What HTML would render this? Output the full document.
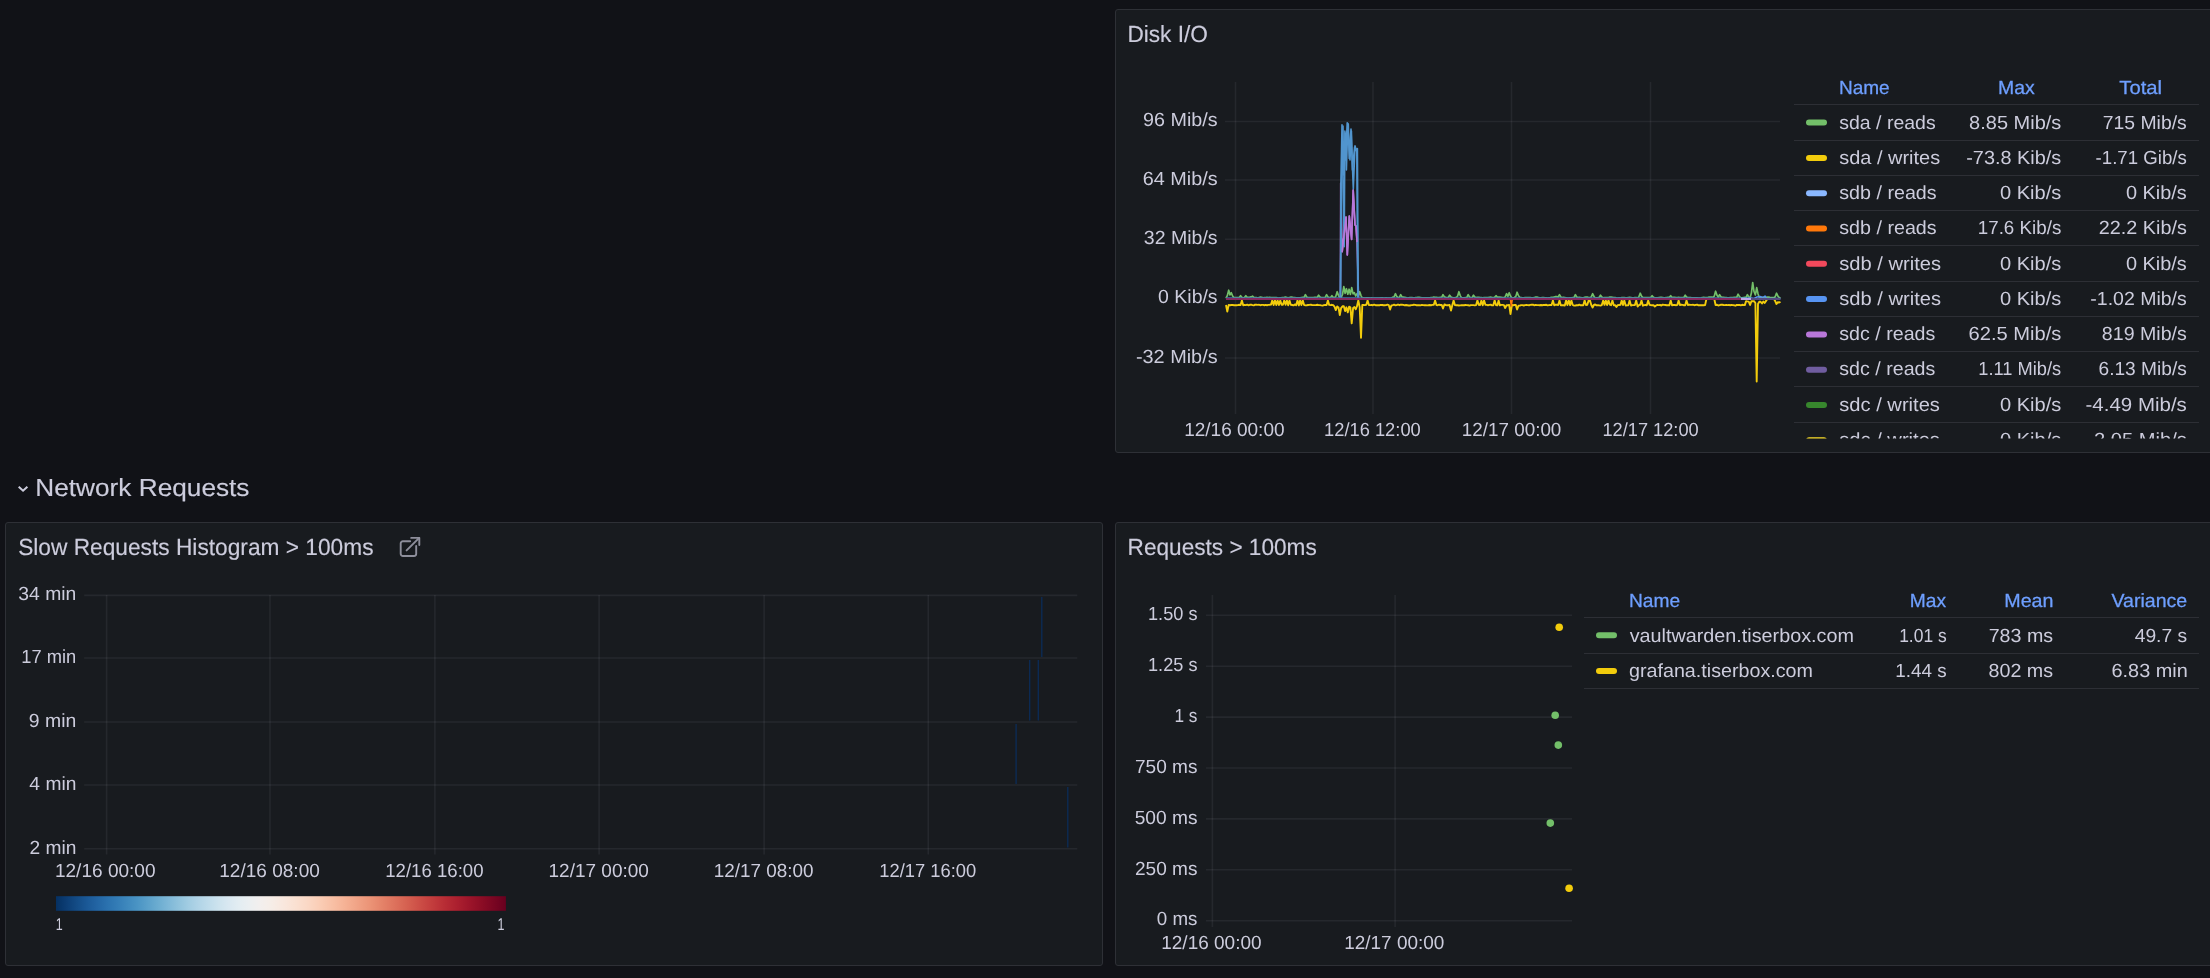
<!DOCTYPE html>
<html lang="en">
<head>
<meta charset="utf-8">
<title>Dashboard</title>
<style>
html,body{margin:0;padding:0;background:#111217;}
body{width:2210px;height:978px;position:relative;overflow:hidden;font-family:"Liberation Sans",sans-serif;color:#ccccdc;}
svg{display:block;position:absolute;left:0;top:0;overflow:hidden;will-change:transform}
svg text{font-family:"Liberation Sans",sans-serif;white-space:pre;text-rendering:geometricPrecision}
.panel{position:absolute;box-sizing:border-box;width:1098px;height:444px;background:#181b1f;border:1px solid #2e3036;border-radius:3px;overflow:hidden}
.panel svg{left:-1px;top:-1px}
.row{position:absolute;left:0;top:465px;width:400px;height:45px}
</style>
</head>
<body>
<section class="panel" style="left:1115px;top:9px">
<svg class="" width="1098" height="444" viewBox="0 0 1098 444">
<text x="12.42" y="33.1" font-size="23.4" fill="#ccccdc" textLength="80.39" lengthAdjust="spacingAndGlyphs" stroke="#ccccdc" stroke-width="0.15">Disk I/O</text>
<line x1="110" y1="112.5" x2="665" y2="112.5" stroke="rgba(235,245,255,0.062)" stroke-width="1.6"/>
<text x="28.08" y="117.2" font-size="19" fill="#ccccdc" textLength="74.54" lengthAdjust="spacingAndGlyphs">96 Mib/s</text>
<line x1="110" y1="171" x2="665" y2="171" stroke="rgba(235,245,255,0.062)" stroke-width="1.6"/>
<text x="27.69" y="175.7" font-size="19" fill="#ccccdc" textLength="74.92" lengthAdjust="spacingAndGlyphs">64 Mib/s</text>
<line x1="110" y1="230.2" x2="665" y2="230.2" stroke="rgba(235,245,255,0.062)" stroke-width="1.6"/>
<text x="28.86" y="234.9" font-size="19" fill="#ccccdc" textLength="73.75" lengthAdjust="spacingAndGlyphs">32 Mib/s</text>
<line x1="110" y1="289.5" x2="665" y2="289.5" stroke="rgba(235,245,255,0.062)" stroke-width="1.6"/>
<text x="43.14" y="294.2" font-size="19" fill="#ccccdc" textLength="59.46" lengthAdjust="spacingAndGlyphs">0 Kib/s</text>
<line x1="110" y1="349" x2="665" y2="349" stroke="rgba(235,245,255,0.062)" stroke-width="1.6"/>
<text x="20.92" y="353.7" font-size="19" fill="#ccccdc" textLength="81.70" lengthAdjust="spacingAndGlyphs">-32 Mib/s</text>
<line x1="120.5" y1="73" x2="120.5" y2="405" stroke="rgba(235,245,255,0.062)" stroke-width="1.6"/>
<text x="69.15" y="426.7" font-size="19" fill="#ccccdc" textLength="100.39" lengthAdjust="spacingAndGlyphs">12/16 00:00</text>
<line x1="258" y1="73" x2="258" y2="405" stroke="rgba(235,245,255,0.062)" stroke-width="1.6"/>
<text x="209.11" y="426.7" font-size="19" fill="#ccccdc" textLength="96.61" lengthAdjust="spacingAndGlyphs">12/16 12:00</text>
<line x1="396.5" y1="73" x2="396.5" y2="405" stroke="rgba(235,245,255,0.062)" stroke-width="1.6"/>
<text x="346.87" y="426.7" font-size="19" fill="#ccccdc" textLength="99.47" lengthAdjust="spacingAndGlyphs">12/17 00:00</text>
<line x1="535.5" y1="73" x2="535.5" y2="405" stroke="rgba(235,245,255,0.062)" stroke-width="1.6"/>
<text x="487.41" y="426.7" font-size="19" fill="#ccccdc" textLength="96.30" lengthAdjust="spacingAndGlyphs">12/17 12:00</text>
<polyline points="111.0,289.2 112.3,286.7 113.7,281.2 115.0,285.9 116.3,283.7 117.6,287.0 118.9,288.6 120.3,288.6 121.6,288.6 122.9,288.7 124.2,288.6 125.6,286.7 126.9,288.4 128.2,288.8 129.5,288.6 130.8,286.7 132.2,288.4 133.5,288.3 134.8,288.2 136.1,287.9 137.5,287.2 138.8,288.4 140.1,288.6 141.4,288.7 142.8,289.0 144.1,288.5 145.4,288.2 146.7,288.4 148.1,288.9 149.4,288.7 150.7,288.6 152.0,288.4 153.3,288.6 154.7,288.4 156.0,288.5 157.3,288.6 158.6,288.7 160.0,288.7 161.3,288.7 162.6,288.9 163.9,289.0 165.3,288.8 166.6,288.7 167.9,288.5 169.2,288.4 170.6,288.2 171.9,288.5 173.2,288.8 174.5,288.5 175.8,288.2 177.2,288.2 178.5,288.6 179.8,288.7 181.1,288.9 182.5,288.8 183.8,288.9 185.1,288.8 186.4,288.6 187.8,288.4 189.1,288.3 190.4,285.7 191.7,287.9 193.1,288.7 194.4,288.6 195.7,288.6 197.0,288.7 198.3,288.6 199.7,288.3 201.0,288.3 202.3,288.5 203.6,286.2 205.0,288.1 206.3,288.5 207.6,288.7 208.9,288.6 210.2,288.3 211.6,285.7 212.9,287.9 214.2,288.6 215.6,288.5 216.9,286.7 218.2,288.4 219.5,288.9 220.8,287.2 222.2,282.7 223.5,286.6 224.8,288.8 226.1,288.7 227.5,285.5 228.8,277.7 230.1,284.3 231.4,279.7 232.8,285.2 234.1,280.2 235.4,285.4 236.7,278.7 238.1,284.8 239.4,283.7 240.7,287.0 242.0,284.7 243.3,287.2 244.7,282.7 246.0,286.6 247.3,289.2 248.6,288.8 250.0,289.1 251.3,288.9 252.6,288.9 253.9,288.9 255.2,289.1 256.6,288.9 257.9,289.1 259.2,289.1 260.5,289.2 261.9,289.1 263.2,289.0 264.5,289.1 265.8,288.9 267.2,288.9 268.5,289.2 269.8,289.0 271.1,288.8 272.4,289.2 273.8,289.0 275.1,289.0 276.4,289.0 277.8,288.2 279.1,287.9 280.4,284.7 281.7,287.4 283.0,288.5 284.4,288.3 285.7,285.7 287.0,287.9 288.3,288.1 289.7,288.4 291.0,288.7 292.3,289.0 293.6,288.8 294.9,288.6 296.3,288.5 297.6,288.7 298.9,288.8 300.2,288.7 301.6,288.5 302.9,288.4 304.2,288.4 305.5,288.6 306.9,288.8 308.2,288.8 309.5,288.8 310.8,288.8 312.2,288.9 313.5,288.9 314.8,288.9 316.1,288.6 317.4,288.5 318.8,288.2 320.1,288.3 321.4,288.3 322.7,288.6 324.1,288.5 325.4,288.3 326.7,288.3 328.0,285.7 329.4,287.9 330.7,288.3 332.0,288.5 333.3,288.5 334.6,286.2 336.0,288.1 337.3,288.7 338.6,288.8 339.9,288.7 341.3,288.5 342.6,287.2 343.9,282.7 345.2,286.6 346.6,288.9 347.9,288.9 349.2,288.9 350.5,288.7 351.9,288.3 353.2,285.7 354.5,287.9 355.8,288.8 357.1,288.5 358.5,286.2 359.8,288.1 361.1,288.6 362.4,288.4 363.8,288.3 365.1,288.6 366.4,288.7 367.7,288.8 369.1,288.6 370.4,288.5 371.7,288.6 373.0,288.5 374.4,288.3 375.7,288.2 377.0,288.5 378.3,288.6 379.6,288.4 381.0,286.7 382.3,288.1 383.6,288.1 384.9,288.2 386.3,288.3 387.6,288.6 388.9,288.7 390.2,287.9 391.6,284.7 392.9,287.4 394.2,283.7 395.5,287.0 396.9,289.0 398.2,288.9 399.5,288.5 400.8,287.4 402.1,283.2 403.5,286.8 404.8,288.3 406.1,288.6 407.4,288.9 408.8,288.8 410.1,288.6 411.4,288.5 412.7,288.5 414.1,288.6 415.4,288.7 416.7,288.8 418.0,288.8 419.4,288.5 420.7,288.2 422.0,288.1 423.3,288.5 424.6,288.9 426.0,288.8 427.3,288.6 428.6,288.5 429.9,288.8 431.3,288.9 432.6,289.0 433.9,288.8 435.2,288.7 436.6,288.4 437.9,288.3 439.2,288.0 440.5,287.7 441.9,287.7 443.2,288.0 444.5,285.7 445.8,287.9 447.1,288.6 448.5,288.4 449.8,288.6 451.1,288.8 452.4,289.0 453.8,289.1 455.1,288.9 456.4,288.8 457.7,288.7 459.1,288.3 460.4,285.7 461.7,287.9 463.0,288.6 464.3,288.4 465.7,288.5 467.0,288.8 468.3,288.8 469.6,288.4 471.0,288.0 472.3,288.2 473.6,288.5 474.9,288.7 476.3,287.9 477.6,284.7 478.9,287.4 480.2,289.0 481.6,288.8 482.9,288.7 484.2,288.5 485.5,286.2 486.8,288.1 488.2,288.8 489.5,288.7 490.8,288.6 492.1,288.5 493.5,288.5 494.8,288.2 496.1,288.1 497.4,288.3 498.8,288.5 500.1,288.7 501.4,288.9 502.7,289.0 504.1,288.9 505.4,289.0 506.7,288.7 508.0,288.6 509.3,288.6 510.7,288.9 512.0,288.8 513.3,288.5 514.6,288.4 516.0,288.6 517.3,288.9 518.6,288.8 519.9,288.7 521.2,288.7 522.6,288.8 523.9,287.8 525.2,284.2 526.5,287.2 527.9,288.7 529.2,288.6 530.5,288.5 531.8,288.6 533.2,288.5 534.5,288.6 535.8,288.5 537.1,286.7 538.5,288.4 539.8,288.8 541.1,288.9 542.4,288.9 543.8,288.7 545.1,288.3 546.4,288.4 547.7,288.6 549.0,288.8 550.4,288.7 551.7,288.5 553.0,288.4 554.3,288.3 555.7,286.7 557.0,288.4 558.3,288.3 559.6,288.4 561.0,288.6 562.3,288.5 563.6,288.4 564.9,288.5 566.2,288.6 567.6,288.6 568.9,288.5 570.2,286.2 571.5,288.1 572.9,288.5 574.2,288.6 575.5,288.7 576.8,288.9 578.2,288.9 579.5,288.9 580.8,288.9 582.1,288.9 583.5,289.0 584.8,289.0 586.1,288.9 587.4,288.6 588.7,288.4 590.1,288.5 591.4,288.6 592.7,288.5 594.0,288.2 595.4,288.2 596.7,288.1 598.0,288.4 599.3,287.1 600.6,282.2 602.0,286.3 603.3,288.3 604.6,285.7 606.0,287.9 607.3,288.3 608.6,288.4 609.9,288.6 611.2,288.6 612.6,288.8 613.9,288.8 615.2,288.7 616.5,288.6 617.9,288.5 619.2,288.3 620.5,288.3 621.8,288.1 623.1,285.2 624.5,287.7 625.8,288.9 627.1,288.9 628.5,288.6 629.8,288.4 631.1,288.3 632.4,285.7 633.7,287.9 635.1,288.8 636.4,284.1 637.7,273.7 639.0,282.5 640.4,285.9 641.7,278.7 643.0,284.8 644.3,288.7 645.6,288.6 647.0,288.5 648.3,288.4 649.6,288.6 650.9,288.4 652.3,288.2 653.6,288.2 654.9,288.4 656.2,288.5 657.6,288.6 658.9,288.7 660.2,287.8 661.5,284.2 662.9,287.2 664.2,288.5 665.5,288.8" fill="none" stroke="#73bf69" stroke-width="1.7" stroke-linejoin="round"/>
<polyline points="111.0,296.0 112.3,302.6 113.7,295.9 115.0,296.2 116.3,296.0 117.6,295.9 118.9,296.2 120.3,296.1 121.6,296.2 122.9,296.1 124.2,295.8 125.6,296.1 126.9,291.4 128.2,296.3 129.5,295.9 130.8,296.1 132.2,295.7 133.5,296.3 134.8,295.8 136.1,295.6 137.5,296.1 138.8,296.4 140.1,295.7 141.4,295.8 142.8,295.9 144.1,295.8 145.4,296.2 146.7,295.9 148.1,295.9 149.4,296.2 150.7,295.9 152.0,296.2 153.3,295.9 154.7,295.8 156.0,295.6 157.3,291.4 158.6,296.0 160.0,291.4 161.3,296.1 162.6,291.4 163.9,296.1 165.3,291.4 166.6,295.8 167.9,295.7 169.2,291.4 170.6,295.8 171.9,291.4 173.2,296.3 174.5,291.4 175.8,295.8 177.2,296.0 178.5,296.4 179.8,295.4 181.1,296.2 182.5,291.4 183.8,296.4 185.1,291.4 186.4,296.0 187.8,291.4 189.1,295.9 190.4,296.4 191.7,296.3 193.1,296.0 194.4,295.9 195.7,295.6 197.0,296.0 198.3,296.1 199.7,296.1 201.0,296.1 202.3,295.8 203.6,296.1 205.0,296.1 206.3,296.4 207.6,296.6 208.9,296.1 210.2,295.9 211.6,296.1 212.9,291.4 214.2,295.9 215.6,296.1 216.9,295.8 218.2,296.2 219.5,297.7 220.8,301.1 222.2,297.4 223.5,298.4 224.8,306.1 226.1,299.1 227.5,297.3 228.8,297.2 230.1,302.1 231.4,298.3 232.8,303.4 234.1,297.7 235.4,298.3 236.7,314.4 238.1,299.1 239.4,298.1 240.7,300.3 242.0,297.2 243.3,291.5 244.7,298.1 246.0,328.7 247.3,296.0 248.6,296.0 250.0,296.1 251.3,295.8 252.6,291.4 253.9,296.1 255.2,296.1 256.6,296.0 257.9,296.2 259.2,295.7 260.5,296.2 261.9,296.2 263.2,296.2 264.5,296.2 265.8,295.9 267.2,296.0 268.5,296.3 269.8,296.2 271.1,296.1 272.4,295.7 273.8,296.2 275.1,300.5 276.4,296.4 277.8,296.2 279.1,295.7 280.4,296.3 281.7,296.1 283.0,295.5 284.4,296.2 285.7,295.7 287.0,295.8 288.3,295.9 289.7,296.4 291.0,296.0 292.3,296.2 293.6,296.5 294.9,296.5 296.3,296.1 297.6,296.0 298.9,295.8 300.2,295.9 301.6,296.2 302.9,296.2 304.2,296.1 305.5,296.4 306.9,295.9 308.2,296.1 309.5,296.3 310.8,296.2 312.2,296.4 313.5,296.2 314.8,296.0 316.1,296.2 317.4,295.9 318.8,295.7 320.1,291.4 321.4,296.1 322.7,296.2 324.1,295.7 325.4,296.0 326.7,295.9 328.0,299.5 329.4,295.5 330.7,296.0 332.0,296.3 333.3,296.2 334.6,295.9 336.0,301.5 337.3,296.3 338.6,291.4 339.9,296.1 341.3,296.2 342.6,296.3 343.9,296.5 345.2,296.4 346.6,296.2 347.9,296.2 349.2,296.3 350.5,296.0 351.9,296.1 353.2,296.3 354.5,296.6 355.8,296.1 357.1,296.1 358.5,296.1 359.8,296.4 361.1,296.1 362.4,291.4 363.8,295.9 365.1,296.1 366.4,291.4 367.7,296.3 369.1,291.4 370.4,295.7 371.7,295.9 373.0,296.2 374.4,295.9 375.7,295.7 377.0,296.4 378.3,296.2 379.6,291.4 381.0,296.0 382.3,296.4 383.6,291.4 384.9,296.4 386.3,295.9 387.6,295.9 388.9,296.1 390.2,299.0 391.6,296.3 392.9,296.2 394.2,295.9 395.5,305.0 396.9,296.0 398.2,296.3 399.5,295.9 400.8,296.0 402.1,300.5 403.5,296.7 404.8,296.6 406.1,296.1 407.4,296.1 408.8,296.5 410.1,296.1 411.4,295.9 412.7,296.1 414.1,296.2 415.4,295.9 416.7,295.7 418.0,295.7 419.4,296.3 420.7,295.9 422.0,296.1 423.3,296.1 424.6,296.2 426.0,296.0 427.3,296.2 428.6,295.9 429.9,296.0 431.3,295.8 432.6,296.4 433.9,296.1 435.2,295.9 436.6,296.0 437.9,291.4 439.2,296.3 440.5,295.7 441.9,295.8 443.2,296.0 444.5,291.4 445.8,296.3 447.1,296.1 448.5,296.3 449.8,296.6 451.1,291.4 452.4,296.0 453.8,291.4 455.1,296.2 456.4,291.4 457.7,296.0 459.1,296.6 460.4,296.5 461.7,296.2 463.0,296.3 464.3,295.6 465.7,296.3 467.0,296.1 468.3,296.2 469.6,291.4 471.0,296.0 472.3,295.7 473.6,291.4 474.9,291.4 476.3,296.0 477.6,298.5 478.9,296.0 480.2,295.5 481.6,296.4 482.9,296.2 484.2,296.4 485.5,296.6 486.8,296.1 488.2,291.4 489.5,295.9 490.8,291.4 492.1,296.0 493.5,291.4 494.8,295.6 496.1,296.2 497.4,291.4 498.8,296.2 500.1,296.1 501.4,298.0 502.7,296.1 504.1,296.0 505.4,295.9 506.7,291.4 508.0,296.1 509.3,291.4 510.7,296.6 512.0,296.4 513.3,296.3 514.6,291.4 516.0,296.5 517.3,296.1 518.6,296.1 519.9,296.0 521.2,291.4 522.6,297.5 523.9,296.1 525.2,295.8 526.5,291.4 527.9,296.7 529.2,296.1 530.5,296.0 531.8,296.2 533.2,291.4 534.5,295.8 535.8,296.1 537.1,296.3 538.5,296.2 539.8,297.5 541.1,296.5 542.4,295.9 543.8,296.1 545.1,296.0 546.4,296.5 547.7,295.6 549.0,295.9 550.4,296.0 551.7,296.3 553.0,296.2 554.3,296.4 555.7,291.4 557.0,296.3 558.3,296.0 559.6,295.9 561.0,296.2 562.3,295.9 563.6,291.4 564.9,296.0 566.2,295.7 567.6,295.9 568.9,296.2 570.2,296.2 571.5,291.4 572.9,296.1 574.2,295.7 575.5,295.9 576.8,295.9 578.2,295.8 579.5,296.2 580.8,295.9 582.1,295.6 583.5,296.3 584.8,296.1 586.1,296.2 587.4,296.1 588.7,296.3 590.1,296.1 591.4,290.0 592.7,290.0 594.0,290.0 595.4,290.0 596.7,290.0 598.0,290.0 599.3,290.0 600.6,296.1 602.0,295.8 603.3,296.5 604.6,296.1 606.0,295.8 607.3,295.7 608.6,296.0 609.9,296.1 611.2,295.9 612.6,296.1 613.9,295.9 615.2,296.2 616.5,295.9 617.9,296.1 619.2,296.3 620.5,296.7 621.8,295.9 623.1,296.0 624.5,295.9 625.8,296.3 627.1,295.8 628.5,296.0 629.8,296.1 631.1,292.1 632.4,292.4 633.7,292.6 635.1,296.0 636.4,292.2 637.7,292.2 639.0,292.1 640.4,294.0 641.7,372.6 643.0,295.0 644.3,292.7 645.6,292.8 647.0,294.5 648.3,292.5 649.6,294.0 650.9,292.1 652.3,290.0 653.6,290.0 654.9,290.0 656.2,290.0 657.6,290.0 658.9,290.0 660.2,292.1 661.5,295.0 662.9,293.2 664.2,293.5 665.5,292.8" fill="none" stroke="#f2cc0c" stroke-width="1.9" stroke-linejoin="round"/>
<polyline points="225.4,290.0 225.7,174.0 227.2,243.0 231.0,208.0 232.3,246.0 234.3,207.0 236.6,230.5 238.2,181.0 240.0,216.0 241.0,217.0 242.0,233.0 243.6,290.0" fill="none" stroke="#b877d9" stroke-width="1.6" stroke-linejoin="round"/>
<polyline points="225.3,290.0 226.6,171.0 228.0,117.0 228.6,166.0 230.2,124.0 231.4,161.0 232.8,116.0 235.0,151.0 236.4,122.0 237.4,161.0 239.6,138.0 241.8,143.0 242.8,290.0" fill="none" stroke="#5195ce" stroke-width="1.6" stroke-linejoin="round"/>
<polyline points="225.5,290.0 225.9,174.0 227.0,115.8 229.2,237.7 229.9,122.0 230.6,151.0 232.2,113.8 233.3,115.0 234.2,149.4 236.0,120.0 238.3,180.0 240.0,136.7 241.2,141.0 242.4,139.6 243.2,290.0" fill="none" stroke="#5195ce" stroke-width="1.6" stroke-linejoin="round"/>
<polyline points="227.2,243.0 231.0,208.0 232.3,246.0 234.3,207.0 236.6,230.5 238.2,181.0 240.0,216.0 241.0,217.0 242.0,233.0" fill="none" stroke="#b877d9" stroke-width="1.6" stroke-linejoin="round"/>
<polyline points="626.0,289.3 636.0,289.0 639.0,289.4 642.0,288.0 645.0,287.5 648.0,288.5 650.0,287.0 651.5,289.4 665.5,289.5" fill="none" stroke="#5794f2" stroke-width="1.5" stroke-linejoin="round"/>
<line x1="111" y1="288.6" x2="626" y2="288.6" stroke="#3f78b0" stroke-width="1" opacity="0.8"/>
<line x1="111" y1="290" x2="626" y2="290" stroke="#84295f" stroke-width="2"/>
<line x1="626" y1="290" x2="636" y2="290" stroke="#c0a3e6" stroke-width="2"/>
<line x1="636" y1="290" x2="665.5" y2="290" stroke="#564a80" stroke-width="2"/>
<polyline points="395.5,291.0 396.3,297.0 397.2,291.0" fill="none" stroke="#ff780a" stroke-width="1.5" stroke-linejoin="round"/>
<clipPath id="lg1"><rect x="670" y="61" width="430" height="368.5"/></clipPath><g clip-path="url(#lg1)">
<text x="723.99" y="84.8" font-size="19" fill="#6e9fff" textLength="50.70" lengthAdjust="spacingAndGlyphs" stroke="#6e9fff" stroke-width="0.3">Name</text>
<text x="882.96" y="84.8" font-size="19" fill="#6e9fff" textLength="36.70" lengthAdjust="spacingAndGlyphs" stroke="#6e9fff" stroke-width="0.3">Max</text>
<text x="1004.32" y="84.8" font-size="19" fill="#6e9fff" textLength="42.72" lengthAdjust="spacingAndGlyphs" stroke="#6e9fff" stroke-width="0.3">Total</text>
<line x1="679" y1="95.5" x2="1084" y2="95.5" stroke="#2d2f35" stroke-width="1"/>
<rect x="691" y="110.6" width="21.0" height="6" rx="3.0" fill="#73bf69"/>
<text x="724.26" y="119.5" font-size="19" fill="#ccccdc" textLength="96.45" lengthAdjust="spacingAndGlyphs">sda / reads</text>
<text x="854.13" y="119.5" font-size="19" fill="#ccccdc" textLength="92.19" lengthAdjust="spacingAndGlyphs">8.85 Mib/s</text>
<text x="987.71" y="119.5" font-size="19" fill="#ccccdc" textLength="84.10" lengthAdjust="spacingAndGlyphs">715 Mib/s</text>
<line x1="679" y1="131.5" x2="1084" y2="131.5" stroke="#2d2f35" stroke-width="1"/>
<rect x="691" y="145.9" width="21.0" height="6" rx="3.0" fill="#f2cc0c"/>
<text x="724.24" y="154.75" font-size="19" fill="#ccccdc" textLength="100.88" lengthAdjust="spacingAndGlyphs">sda / writes</text>
<text x="851.22" y="154.75" font-size="19" fill="#ccccdc" textLength="95.10" lengthAdjust="spacingAndGlyphs">-73.8 Kib/s</text>
<text x="980.57" y="154.75" font-size="19" fill="#ccccdc" textLength="91.20" lengthAdjust="spacingAndGlyphs">-1.71 Gib/s</text>
<line x1="679" y1="166.5" x2="1084" y2="166.5" stroke="#2d2f35" stroke-width="1"/>
<rect x="691" y="181.2" width="21.0" height="6" rx="3.0" fill="#8ab8ff"/>
<text x="724.25" y="190.0" font-size="19" fill="#ccccdc" textLength="97.36" lengthAdjust="spacingAndGlyphs">sdb / reads</text>
<text x="885.02" y="190.0" font-size="19" fill="#ccccdc" textLength="61.31" lengthAdjust="spacingAndGlyphs">0 Kib/s</text>
<text x="1010.92" y="190.0" font-size="19" fill="#ccccdc" textLength="60.90" lengthAdjust="spacingAndGlyphs">0 Kib/s</text>
<line x1="679" y1="201.5" x2="1084" y2="201.5" stroke="#2d2f35" stroke-width="1"/>
<rect x="691" y="216.5" width="21.0" height="6" rx="3.0" fill="#ff780a"/>
<text x="724.25" y="225.25" font-size="19" fill="#ccccdc" textLength="97.36" lengthAdjust="spacingAndGlyphs">sdb / reads</text>
<text x="862.77" y="225.25" font-size="19" fill="#ccccdc" textLength="83.51" lengthAdjust="spacingAndGlyphs">17.6 Kib/s</text>
<text x="983.8" y="225.25" font-size="19" fill="#ccccdc" textLength="88.01" lengthAdjust="spacingAndGlyphs">22.2 Kib/s</text>
<line x1="679" y1="236.5" x2="1084" y2="236.5" stroke="#2d2f35" stroke-width="1"/>
<rect x="691" y="251.8" width="21.0" height="6" rx="3.0" fill="#f2495c"/>
<text x="724.24" y="260.5" font-size="19" fill="#ccccdc" textLength="101.89" lengthAdjust="spacingAndGlyphs">sdb / writes</text>
<text x="885.02" y="260.5" font-size="19" fill="#ccccdc" textLength="61.31" lengthAdjust="spacingAndGlyphs">0 Kib/s</text>
<text x="1010.92" y="260.5" font-size="19" fill="#ccccdc" textLength="60.90" lengthAdjust="spacingAndGlyphs">0 Kib/s</text>
<line x1="679" y1="272.5" x2="1084" y2="272.5" stroke="#2d2f35" stroke-width="1"/>
<rect x="691" y="287.1" width="21.0" height="6" rx="3.0" fill="#5794f2"/>
<text x="724.24" y="295.75" font-size="19" fill="#ccccdc" textLength="101.89" lengthAdjust="spacingAndGlyphs">sdb / writes</text>
<text x="885.02" y="295.75" font-size="19" fill="#ccccdc" textLength="61.31" lengthAdjust="spacingAndGlyphs">0 Kib/s</text>
<text x="975.33" y="295.75" font-size="19" fill="#ccccdc" textLength="96.47" lengthAdjust="spacingAndGlyphs">-1.02 Mib/s</text>
<line x1="679" y1="307.5" x2="1084" y2="307.5" stroke="#2d2f35" stroke-width="1"/>
<rect x="691" y="322.4" width="21.0" height="6" rx="3.0" fill="#b877d9"/>
<text x="724.25" y="331.0" font-size="19" fill="#ccccdc" textLength="96.06" lengthAdjust="spacingAndGlyphs">sdc / reads</text>
<text x="853.58" y="331.0" font-size="19" fill="#ccccdc" textLength="92.75" lengthAdjust="spacingAndGlyphs">62.5 Mib/s</text>
<text x="986.85" y="331.0" font-size="19" fill="#ccccdc" textLength="84.96" lengthAdjust="spacingAndGlyphs">819 Mib/s</text>
<line x1="679" y1="342.5" x2="1084" y2="342.5" stroke="#2d2f35" stroke-width="1"/>
<rect x="691" y="357.7" width="21.0" height="6" rx="3.0" fill="#705da0"/>
<text x="724.25" y="366.25" font-size="19" fill="#ccccdc" textLength="96.06" lengthAdjust="spacingAndGlyphs">sdc / reads</text>
<text x="863.33" y="366.25" font-size="19" fill="#ccccdc" textLength="82.92" lengthAdjust="spacingAndGlyphs">1.11 Mib/s</text>
<text x="983.53" y="366.25" font-size="19" fill="#ccccdc" textLength="88.26" lengthAdjust="spacingAndGlyphs">6.13 Mib/s</text>
<line x1="679" y1="377.5" x2="1084" y2="377.5" stroke="#2d2f35" stroke-width="1"/>
<rect x="691" y="393.0" width="21.0" height="6" rx="3.0" fill="#37872d"/>
<text x="724.24" y="401.5" font-size="19" fill="#ccccdc" textLength="100.69" lengthAdjust="spacingAndGlyphs">sdc / writes</text>
<text x="885.02" y="401.5" font-size="19" fill="#ccccdc" textLength="61.31" lengthAdjust="spacingAndGlyphs">0 Kib/s</text>
<text x="970.49" y="401.5" font-size="19" fill="#ccccdc" textLength="101.35" lengthAdjust="spacingAndGlyphs">-4.49 Mib/s</text>
<line x1="679" y1="413.5" x2="1084" y2="413.5" stroke="#2d2f35" stroke-width="1"/>
<rect x="691" y="428.3" width="21.0" height="6" rx="3.0" fill="#fade2a"/>
<text x="724.24" y="436.75" font-size="19" fill="#ccccdc" textLength="100.69" lengthAdjust="spacingAndGlyphs">sdc / writes</text>
<text x="885.02" y="436.75" font-size="19" fill="#ccccdc" textLength="61.31" lengthAdjust="spacingAndGlyphs">0 Kib/s</text>
<text x="972.21" y="436.75" font-size="19" fill="#ccccdc" textLength="99.62" lengthAdjust="spacingAndGlyphs">-2.05 Mib/s</text>
<line x1="679" y1="448.5" x2="1084" y2="448.5" stroke="#2d2f35" stroke-width="1"/>
</g>
</svg>
</section>
<div class="row">
<svg class="" width="400" height="45" viewBox="0 0 400 45">
<path d="M18.7 21.7 L23.05 25.7 L27.4 21.7" fill="none" stroke="#ccccdc" stroke-width="2" stroke-linecap="butt" stroke-linejoin="miter"/>
<text x="35.32" y="31.0" font-size="24.7" fill="#ccccdc" textLength="214.15" lengthAdjust="spacingAndGlyphs" stroke="#ccccdc" stroke-width="0.15">Network Requests</text>
</svg>
</div>
<section class="panel" style="left:5px;top:522px">
<svg class="" width="1098" height="444" viewBox="0 0 1098 444">
<text x="13.14" y="33" font-size="23.4" fill="#ccccdc" textLength="355.40" lengthAdjust="spacingAndGlyphs" stroke="#ccccdc" stroke-width="0.15">Slow Requests Histogram &gt; 100ms</text>
<g fill="none" stroke="#8e8f9c" stroke-width="1.9" stroke-linecap="round" stroke-linejoin="round"><path d="M405.2 19.2 H397.9 a2.2 2.2 0 0 0 -2.2 2.2 V31.8 a2.2 2.2 0 0 0 2.2 2.2 H409 a2.2 2.2 0 0 0 2.2 -2.2 V24"/><path d="M401.6 28.4 L414.2 15.9"/><path d="M406.2 15.9 H414.3 V23.0"/></g>
<line x1="79.2" y1="73.4" x2="1072.3" y2="73.4" stroke="rgba(235,245,255,0.062)" stroke-width="1.6"/>
<text x="13.36" y="78.1" font-size="19" fill="#ccccdc" textLength="57.99" lengthAdjust="spacingAndGlyphs">34 min</text>
<line x1="79.2" y1="136.0" x2="1072.3" y2="136.0" stroke="rgba(235,245,255,0.062)" stroke-width="1.6"/>
<text x="16.3" y="140.7" font-size="19" fill="#ccccdc" textLength="54.99" lengthAdjust="spacingAndGlyphs">17 min</text>
<line x1="79.2" y1="200.0" x2="1072.3" y2="200.0" stroke="rgba(235,245,255,0.062)" stroke-width="1.6"/>
<text x="23.89" y="204.7" font-size="19" fill="#ccccdc" textLength="47.47" lengthAdjust="spacingAndGlyphs">9 min</text>
<line x1="79.2" y1="263.0" x2="1072.3" y2="263.0" stroke="rgba(235,245,255,0.062)" stroke-width="1.6"/>
<text x="24.36" y="267.7" font-size="19" fill="#ccccdc" textLength="46.99" lengthAdjust="spacingAndGlyphs">4 min</text>
<line x1="79.2" y1="326.8" x2="1072.3" y2="326.8" stroke="rgba(235,245,255,0.062)" stroke-width="1.6"/>
<text x="24.44" y="331.5" font-size="19" fill="#ccccdc" textLength="46.91" lengthAdjust="spacingAndGlyphs">2 min</text>
<line x1="101.6" y1="73" x2="101.6" y2="332.5" stroke="rgba(235,245,255,0.062)" stroke-width="1.6"/>
<text x="49.95" y="355" font-size="19" fill="#ccccdc" textLength="100.59" lengthAdjust="spacingAndGlyphs">12/16 00:00</text>
<line x1="265.0" y1="73" x2="265.0" y2="332.5" stroke="rgba(235,245,255,0.062)" stroke-width="1.6"/>
<text x="214.25" y="355" font-size="19" fill="#ccccdc" textLength="100.59" lengthAdjust="spacingAndGlyphs">12/16 08:00</text>
<line x1="429.9" y1="73" x2="429.9" y2="332.5" stroke="rgba(235,245,255,0.062)" stroke-width="1.6"/>
<text x="380.28" y="355" font-size="19" fill="#ccccdc" textLength="98.24" lengthAdjust="spacingAndGlyphs">12/16 16:00</text>
<line x1="594.1" y1="73" x2="594.1" y2="332.5" stroke="rgba(235,245,255,0.062)" stroke-width="1.6"/>
<text x="543.55" y="355" font-size="19" fill="#ccccdc" textLength="100.29" lengthAdjust="spacingAndGlyphs">12/17 00:00</text>
<line x1="759.1" y1="73" x2="759.1" y2="332.5" stroke="rgba(235,245,255,0.062)" stroke-width="1.6"/>
<text x="708.86" y="355" font-size="19" fill="#ccccdc" textLength="99.67" lengthAdjust="spacingAndGlyphs">12/17 08:00</text>
<line x1="923.3" y1="73" x2="923.3" y2="332.5" stroke="rgba(235,245,255,0.062)" stroke-width="1.6"/>
<text x="874.3" y="355" font-size="19" fill="#ccccdc" textLength="96.91" lengthAdjust="spacingAndGlyphs">12/17 16:00</text>
<line x1="1036.8" y1="75" x2="1036.8" y2="135" stroke="#0b2c58" stroke-width="1.3"/>
<line x1="1024.7" y1="138" x2="1024.7" y2="198.5" stroke="#0b2c58" stroke-width="1.3"/>
<line x1="1033.3" y1="138" x2="1033.3" y2="198.5" stroke="#0b2c58" stroke-width="1.3"/>
<line x1="1011.1" y1="202" x2="1011.1" y2="262" stroke="#0b2c58" stroke-width="1.3"/>
<line x1="1062.8" y1="265" x2="1062.8" y2="325.5" stroke="#0b2c58" stroke-width="1.3"/>
<defs><linearGradient id="rdbu" x1="0" x2="1" y1="0" y2="0"><stop offset="0.00%" stop-color="#053061"/><stop offset="2.26%" stop-color="#0c3d74"/><stop offset="4.52%" stop-color="#134b85"/><stop offset="6.78%" stop-color="#1a5896"/><stop offset="9.04%" stop-color="#2264a3"/><stop offset="11.30%" stop-color="#2a71ae"/><stop offset="13.56%" stop-color="#337cb6"/><stop offset="15.82%" stop-color="#3e88bd"/><stop offset="18.08%" stop-color="#4a94c4"/><stop offset="20.34%" stop-color="#5aa0ca"/><stop offset="22.60%" stop-color="#6bacd0"/><stop offset="24.86%" stop-color="#7db7d7"/><stop offset="27.12%" stop-color="#8fc2dc"/><stop offset="29.38%" stop-color="#a1cce2"/><stop offset="31.64%" stop-color="#b1d4e7"/><stop offset="33.90%" stop-color="#bfdceb"/><stop offset="36.16%" stop-color="#cde3ee"/><stop offset="38.42%" stop-color="#d9e8f1"/><stop offset="40.68%" stop-color="#e3edf2"/><stop offset="42.94%" stop-color="#ebeff1"/><stop offset="45.20%" stop-color="#f2efee"/><stop offset="47.94%" stop-color="#f6ede7"/><stop offset="50.68%" stop-color="#f9e7dd"/><stop offset="53.42%" stop-color="#fae0d1"/><stop offset="56.16%" stop-color="#fad7c4"/><stop offset="58.90%" stop-color="#faccb4"/><stop offset="61.64%" stop-color="#f8bfa4"/><stop offset="64.38%" stop-color="#f5b194"/><stop offset="67.12%" stop-color="#f0a285"/><stop offset="69.86%" stop-color="#eb9376"/><stop offset="72.60%" stop-color="#e48268"/><stop offset="75.34%" stop-color="#dd715c"/><stop offset="78.08%" stop-color="#d56050"/><stop offset="80.82%" stop-color="#cc4e46"/><stop offset="83.56%" stop-color="#c33d3d"/><stop offset="86.30%" stop-color="#b82d35"/><stop offset="89.04%" stop-color="#ac202f"/><stop offset="91.78%" stop-color="#9d152a"/><stop offset="94.52%" stop-color="#8c0d25"/><stop offset="97.26%" stop-color="#7a0622"/><stop offset="100.00%" stop-color="#67001f"/></linearGradient></defs>
<rect x="51" y="374.2" width="449.9" height="14.6" fill="url(#rdbu)"/>
<text x="50.65" y="408" font-size="17.2" fill="#ccccdc" textLength="6.97" lengthAdjust="spacingAndGlyphs">1</text>
<text x="492.45" y="408" font-size="17.2" fill="#ccccdc" textLength="6.97" lengthAdjust="spacingAndGlyphs">1</text>
</svg>
</section>
<section class="panel" style="left:1115px;top:522px">
<svg class="" width="1098" height="444" viewBox="0 0 1098 444">
<text x="12.62" y="33.0" font-size="23.4" fill="#ccccdc" textLength="189.12" lengthAdjust="spacingAndGlyphs" stroke="#ccccdc" stroke-width="0.15">Requests &gt; 100ms</text>
<line x1="91" y1="398.7" x2="457" y2="398.7" stroke="rgba(235,245,255,0.062)" stroke-width="1.6"/>
<text x="41.87" y="403.4" font-size="19" fill="#ccccdc" textLength="40.61" lengthAdjust="spacingAndGlyphs">0 ms</text>
<line x1="91" y1="347.8" x2="457" y2="347.8" stroke="rgba(235,245,255,0.062)" stroke-width="1.6"/>
<text x="20.04" y="352.5" font-size="19" fill="#ccccdc" textLength="62.45" lengthAdjust="spacingAndGlyphs">250 ms</text>
<line x1="91" y1="296.9" x2="457" y2="296.9" stroke="rgba(235,245,255,0.062)" stroke-width="1.6"/>
<text x="19.73" y="301.6" font-size="19" fill="#ccccdc" textLength="62.76" lengthAdjust="spacingAndGlyphs">500 ms</text>
<line x1="91" y1="246.0" x2="457" y2="246.0" stroke="rgba(235,245,255,0.062)" stroke-width="1.6"/>
<text x="20.02" y="250.7" font-size="19" fill="#ccccdc" textLength="62.46" lengthAdjust="spacingAndGlyphs">750 ms</text>
<line x1="91" y1="195.1" x2="457" y2="195.1" stroke="rgba(235,245,255,0.062)" stroke-width="1.6"/>
<text x="59.38" y="199.8" font-size="19" fill="#ccccdc" textLength="23.04" lengthAdjust="spacingAndGlyphs">1 s</text>
<line x1="91" y1="144.2" x2="457" y2="144.2" stroke="rgba(235,245,255,0.062)" stroke-width="1.6"/>
<text x="33.02" y="148.9" font-size="19" fill="#ccccdc" textLength="49.44" lengthAdjust="spacingAndGlyphs">1.25 s</text>
<line x1="91" y1="93.3" x2="457" y2="93.3" stroke="rgba(235,245,255,0.062)" stroke-width="1.6"/>
<text x="33.02" y="98.0" font-size="19" fill="#ccccdc" textLength="49.44" lengthAdjust="spacingAndGlyphs">1.50 s</text>
<line x1="97.4" y1="73" x2="97.4" y2="405" stroke="rgba(235,245,255,0.062)" stroke-width="1.6"/>
<text x="46.25" y="427" font-size="19" fill="#ccccdc" textLength="100.29" lengthAdjust="spacingAndGlyphs">12/16 00:00</text>
<line x1="280.1" y1="73" x2="280.1" y2="405" stroke="rgba(235,245,255,0.062)" stroke-width="1.6"/>
<text x="229.26" y="427" font-size="19" fill="#ccccdc" textLength="100.08" lengthAdjust="spacingAndGlyphs">12/17 00:00</text>
<circle cx="444.2" cy="105.3" r="3.8" fill="#f2cc0c"/>
<circle cx="440.2" cy="193.3" r="3.8" fill="#73bf69"/>
<circle cx="443.3" cy="223.1" r="3.8" fill="#73bf69"/>
<circle cx="435.3" cy="301.1" r="3.8" fill="#73bf69"/>
<circle cx="454.1" cy="366.2" r="3.8" fill="#f2cc0c"/>
<text x="513.98" y="85.0" font-size="19" fill="#6e9fff" textLength="51.12" lengthAdjust="spacingAndGlyphs" stroke="#6e9fff" stroke-width="0.3">Name</text>
<text x="794.87" y="85.0" font-size="19" fill="#6e9fff" textLength="36.28" lengthAdjust="spacingAndGlyphs" stroke="#6e9fff" stroke-width="0.3">Max</text>
<text x="889.23" y="85.0" font-size="19" fill="#6e9fff" textLength="49.30" lengthAdjust="spacingAndGlyphs" stroke="#6e9fff" stroke-width="0.3">Mean</text>
<text x="996.47" y="85.0" font-size="19" fill="#6e9fff" textLength="75.74" lengthAdjust="spacingAndGlyphs" stroke="#6e9fff" stroke-width="0.3">Variance</text>
<line x1="469" y1="95.5" x2="1084" y2="95.5" stroke="#2d2f35" stroke-width="1"/>
<line x1="469" y1="131.5" x2="1084" y2="131.5" stroke="#2d2f35" stroke-width="1"/>
<line x1="469" y1="166.5" x2="1084" y2="166.5" stroke="#2d2f35" stroke-width="1"/>
<rect x="481" y="110.2" width="21.0" height="6" rx="3.0" fill="#73bf69"/>
<rect x="481" y="146.0" width="21.0" height="6" rx="3.0" fill="#f2cc0c"/>
<text x="514.73" y="119.5" font-size="19" fill="#ccccdc" textLength="224.17" lengthAdjust="spacingAndGlyphs">vaultwarden.tiserbox.com</text>
<text x="513.97" y="155.2" font-size="19" fill="#ccccdc" textLength="184.03" lengthAdjust="spacingAndGlyphs">grafana.tiserbox.com</text>
<text x="784.17" y="119.5" font-size="19" fill="#ccccdc" textLength="47.56" lengthAdjust="spacingAndGlyphs">1.01 s</text>
<text x="780.36" y="155.2" font-size="19" fill="#ccccdc" textLength="51.42" lengthAdjust="spacingAndGlyphs">1.44 s</text>
<text x="873.69" y="119.5" font-size="19" fill="#ccccdc" textLength="64.42" lengthAdjust="spacingAndGlyphs">783 ms</text>
<text x="873.54" y="155.2" font-size="19" fill="#ccccdc" textLength="64.57" lengthAdjust="spacingAndGlyphs">802 ms</text>
<text x="1019.66" y="119.5" font-size="19" fill="#ccccdc" textLength="52.54" lengthAdjust="spacingAndGlyphs">49.7 s</text>
<text x="996.49" y="155.2" font-size="19" fill="#ccccdc" textLength="76.30" lengthAdjust="spacingAndGlyphs">6.83 min</text>
</svg>
</section>
</body>
</html>
